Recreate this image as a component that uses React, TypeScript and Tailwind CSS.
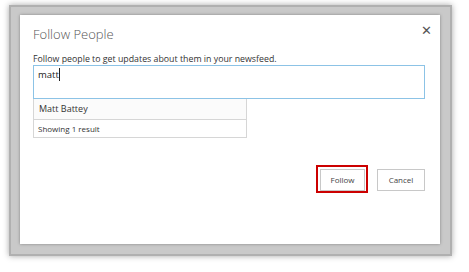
export default function App() {
  return (
    <div
      className="h-[272px] w-[469px] bg-white pl-[9px] pt-[5px]"
      style={{ fontFamily: '"Open Sans", "Noto Sans", sans-serif' }}
    >
      <div className="h-[251px] w-[443px] border-2 border-[#b0b0b0] bg-[#c9c9c9] pb-[10px] pl-[9px] pr-[10px] pt-[8px] shadow-[0_0_6px_rgba(0,0,0,0.35)]">
        <div className="relative flex h-[229px] w-[420px] flex-col bg-white pl-[13px] pr-[15px] text-[#444] shadow-[0_0_3px_rgba(0,0,0,0.35)]">
          <button className="absolute right-[8px] top-[9px] text-[13px] leading-none text-[#555]">
            ✕
          </button>
          <h1 className="mt-[10px] text-[13px] font-light leading-[18px] text-[#555]">
            Follow People
          </h1>
          <p className="mt-[10px] text-[8.8px] leading-[12px] text-[#333]">
            Follow people to get updates about them in your newsfeed.
          </p>
          <div className="h-[34px] w-[392px] border border-[#8cc3e6] px-[4px] pt-[2px] text-[9.5px] leading-[14px] text-[#222]">
            matt<span className="border-l border-[#222]" />
          </div>
          <div className="w-[214px] border border-t-0 border-[#d6d6d6] text-[#333]">
            <div className="flex h-[21px] items-center border-b border-[#d6d6d6] bg-[#fbfbfb] pl-[5px] text-[9px]">
              Matt Battey
            </div>
            <div className="flex h-[17px] items-center pl-[4px] text-[8px]">
              Showing 1 result
            </div>
          </div>
          <div className="mt-[27px] flex justify-end gap-[9px]">
            <div className="border-2 border-[#cc0000] pl-[2px] pr-[1px] pt-[2px]">
              <button className="block h-[22px] w-[45px] border border-[#c8c8c8] bg-white text-[8px] text-[#444]">
                Follow
              </button>
            </div>
            <button className="mt-[4px] h-[22px] w-[48px] border border-[#c8c8c8] bg-white text-[8px] text-[#444]">
              Cancel
            </button>
          </div>
        </div>
      </div>
    </div>
  );
}
